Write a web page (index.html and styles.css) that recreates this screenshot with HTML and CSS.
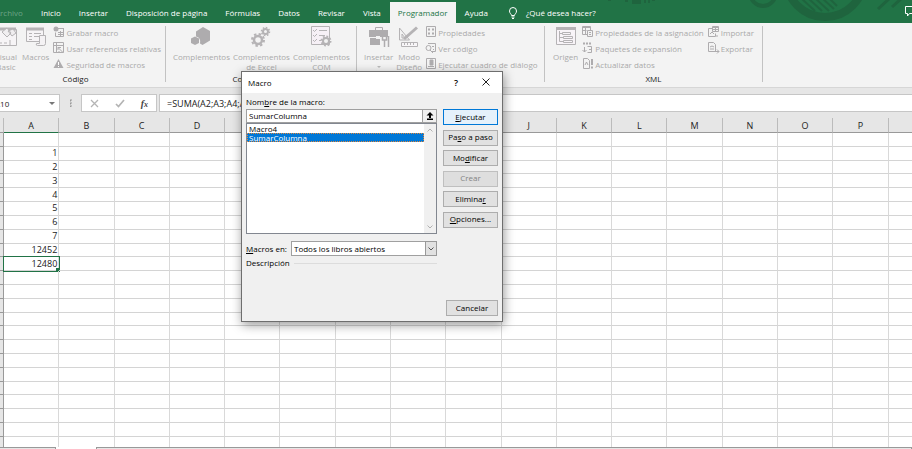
FILE: index.html
```html
<!DOCTYPE html>
<html lang="es">
<head>
    <meta charset="UTF-8">
    <meta name="viewport" content="width=device-width, initial-scale=1.0">
    <title>Excel - Macro</title>
    <link rel="stylesheet" href="styles.css">
</head>
<body>
    <div class="app">
        <header class="topbar">
            <svg class="topbar-art" width="340" height="23" viewBox="0 0 340 23" aria-hidden="true">
                <g fill="none" stroke="#1f643e">
                    <circle cx="191" cy="-6.500" r="12.500" stroke-width="4"/>
                    <circle cx="253" cy="-22" r="39" stroke-width="8"/>
                    <path stroke-width="2" d="M229-2l14 13M236-2l14 13M243-2l14 13M250-2l12 11M257-2l8 8"/>
                    <path stroke-width="3" d="M306 9l12-11M320 7l10-9"/>
                </g>
                <path fill="#1f643e" d="M36 0h3v1h-3zM53 0h3v2h-3zM60 0h9v4h-9zM72 0h2v3h-2zM76 0h2v3h-2zM80 0h3v1h-3z"/>
            </svg>
            <nav class="tabs">
                <a class="tab tab-file" href="#">Archivo</a>
                <a class="tab" href="#">Inicio</a>
                <a class="tab" href="#">Insertar</a>
                <a class="tab" href="#">Disposición de página</a>
                <a class="tab" href="#">Fórmulas</a>
                <a class="tab" href="#">Datos</a>
                <a class="tab" href="#">Revisar</a>
                <a class="tab" href="#">Vista</a>
                <a class="tab active" href="#">Programador</a>
                <a class="tab" href="#">Ayuda</a>
                <a class="tab tell-me" href="#">
                    <svg width="10" height="12" viewBox="0 0 10 12" fill="none" stroke="#fff" stroke-width="1"><path d="M3.500 8.500C3.500 7 1.500 6.500 1.500 4a3.500 3.500 0 0 1 7 0C8.500 6.500 6.500 7 6.500 8.500zM3.500 10h3M4 11.500h2"/></svg>
                    ¿Qué desea hacer?
                </a>
            </nav>
            <button class="comments" aria-label="Comentarios">
                <svg width="12" height="11" viewBox="0 0 12 11" fill="none" stroke="#fff"><path d="M.5.5h11v7h-7l-2 2.500v-2.500h-2z"/></svg>
            </button>
        </header>

        <div class="ribbon">
            <section class="group group-code">
                <div class="group-body">
                    <button class="big" disabled>
                        <svg width="24" height="22" viewBox="0 0 24 22" fill="none" stroke="#b5b3b5"><path d="M1.500 3.500h21v16h-21z" fill="#f6f4f6"/><path d="M2 3h20" stroke-width="3"/><path d="M8 6l5-4 4 5-4 4zM14 5l5-2 3 4-4 3z" fill="#f0eef0"/><path d="M5 17h3M10 17h3M16 14v5"/></svg>
                        <span>Visual<br>Basic</span>
                    </button>
                    <button class="big" disabled>
                        <svg width="22" height="22" viewBox="0 0 22 22" fill="none" stroke="#b5b3b5"><path d="M1.500 2.500h17v13h-17z" fill="#f6f4f6"/><path d="M1 3h18" stroke-width="3"/><path d="M4 7.500h3M9 7.500h7M4 10.500h3M9 10.500h5M4 13.500h3"/><path d="M14.500 9.500h6v8q0 2-2 2h-6q-2 0-1-2h3z" fill="#f4f2f4"/></svg>
                        <span>Macros</span>
                    </button>
                    <div class="stack">
                        <button class="small" disabled>
                            <svg width="12" height="12" viewBox="0 0 12 12" fill="none" stroke="#aeacae"><path d="M3.500 2.500h7v8h-8v-4"/><path d="M6 2.500h5M5 6.500h5M5 8.500h5M7.500 5v5" /><circle cx="3" cy="3" r="2.500" fill="#aeacae" stroke="none"/></svg>
                            Grabar macro
                        </button>
                        <button class="small" disabled>
                            <svg width="12" height="12" viewBox="0 0 12 12" fill="none" stroke="#aeacae"><path d="M.5.5h10v10h-10zM.5 3.500h10M3.500.5v10"/><path d="M5 5.500l5 5M5 8v-2.500h3M5 10h2"/></svg>
                            Usar referencias relativas
                        </button>
                        <button class="small" disabled>
                            <svg width="12" height="12" viewBox="0 0 12 12"><path d="M5.500 1L10.500 10H.5z" fill="#aeacae"/><path d="M5.500 4v3M5.500 8v1" stroke="#fff"/></svg>
                            Seguridad de macros
                        </button>
                    </div>
                </div>
                <h2 class="group-title">Código</h2>
            </section>

            <section class="group group-addins">
                <div class="group-body">
                    <button class="big" disabled>
                        <svg width="22" height="22" viewBox="0 0 22 22" fill="#aeacae"><path d="M6 5.500L13 1l7 4v9.500L12.500 19 10 17.500q1-6-4-7z"/><path d="M1 12.500l4-2 4 2v4.500l-4 2-4-2z"/></svg>
                        <span>Complementos</span>
                    </button>
                    <button class="big" disabled>
                        <svg width="22" height="22" viewBox="0 0 22 22" fill="none" stroke="#b5b3b5"><circle cx="8" cy="14" r="4" stroke-width="2.500"/><circle cx="8" cy="14" r="6" stroke-width="2" stroke-dasharray="2.400 2.300"/><circle cx="15.500" cy="5.500" r="2.500" stroke-width="2"/><circle cx="15.500" cy="5.500" r="4" stroke-width="1.500" stroke-dasharray="1.600 1.500"/></svg>
                        <span>Complementos<br>de Excel</span>
                    </button>
                    <button class="big" disabled>
                        <svg width="22" height="22" viewBox="0 0 22 22" fill="none" stroke="#b5b3b5"><path d="M1.500.5h18v18h-18z" fill="#f6f0f6"/><path d="M3 4l1.500 1.500L7 3M3 9l1.500 1.500L7 8M3 14l1.500 1.500L7 13M9 4.500h8M9 9.500h6M9 14.500h2"/><circle cx="16" cy="15" r="3" fill="#f2f2f2" stroke-width="2"/><circle cx="16" cy="15" r="4.500" stroke-width="2" stroke-dasharray="1.800 1.700"/></svg>
                        <span>Complementos<br>COM</span>
                    </button>
                </div>
                <h2 class="group-title">Complementos</h2>
            </section>

            <section class="group group-controls">
                <div class="group-body">
                    <button class="big" disabled>
                        <svg width="22" height="22" viewBox="0 0 22 22"><path d="M7.500 4.500v-3h7v3" fill="none" stroke="#aeacae"/><path d="M1 4h19v7H1zM2 12h10v7H2z" fill="#aeacae"/><path d="M14.500 11v3h4v-3M16.500 14v7M20.500 10v11" fill="none" stroke="#aeacae" stroke-width="1.500"/><path d="M8 10h4v3H8z" fill="#f2f2f2"/></svg>
                        <span>Insertar</span>
                        <i class="caret"></i>
                    </button>
                    <button class="big" disabled>
                        <svg width="22" height="22" viewBox="0 0 22 22" fill="none" stroke="#b5b3b5"><path d="M1.500 2v12h10zM4 8v4h3z"/><path d="M6 13L19 1.500" stroke-width="3"/><path d="M3.500 16.500h16v4h-16z" fill="#f8f6f8"/><path d="M6.500 17v2M9.500 17v2M12.500 17v2M15.500 17v2"/></svg>
                        <span>Modo<br>Diseño</span>
                    </button>
                    <div class="stack">
                        <button class="small" disabled>
                            <svg width="12" height="12" viewBox="0 0 12 12" fill="none" stroke="#aeacae"><path d="M1.500.5h9v10h-9z"/><path d="M3 3.500h2M7 3.500h2M3 7.500h2M7 7.500h2" stroke-width="2"/></svg>
                            Propiedades
                        </button>
                        <button class="small" disabled>
                            <svg width="12" height="12" viewBox="0 0 12 12" fill="none" stroke="#aeacae"><path d="M3 1.500h7.500v8H7M7 4.500h2M8 7.500h1"/><circle cx="3.500" cy="6" r="2.500"/><path d="M5 8l3 3"/></svg>
                            Ver código
                        </button>
                        <button class="small" disabled>
                            <svg width="12" height="12" viewBox="0 0 12 12" fill="none" stroke="#aeacae"><path d="M1.500.5h9v10h-9zM3 8.500h6"/><path d="M5 2h3v5H5z" fill="#aeacae"/></svg>
                            Ejecutar cuadro de diálogo
                        </button>
                    </div>
                </div>
                <h2 class="group-title">Controles</h2>
            </section>

            <section class="group group-xml">
                <div class="group-body">
                    <button class="big" disabled>
                        <svg width="22" height="22" viewBox="0 0 22 22" fill="none" stroke="#b5b3b5"><path d="M1.500 1.500h19v17h-19z" fill="#f8f4f8"/><path d="M1 2.500h20" stroke-width="3"/><path d="M4.500 5v10.500h4M4.500 7.500h3M4.500 11.500h4M7.500 6.500h8v2h-8zM8.500 10.500h9v2h-9zM8.500 14.500h9v2h-9z"/></svg>
                        <span>Origen</span>
                    </button>
                    <div class="stack">
                        <button class="small" disabled>
                            <svg width="12" height="12" viewBox="0 0 12 12" fill="none" stroke="#aeacae"><path d="M.5.5h8v8h-8zM0 1.500h9M.5 4.500h4M3.500 1v7"/><path d="M5.500 4.500h5v6h-5zM7 6.500h2M7 8.500h2" fill="#f2f2f2"/></svg>
                            Propiedades de la asignación
                        </button>
                        <button class="small" disabled>
                            <svg width="12" height="12" viewBox="0 0 12 12" fill="none" stroke="#aeacae"><path d="M1 1.500h9" stroke-width="2" stroke-dasharray="2 1"/><path d="M5.500 4.500h4v6h-4M2.500 5v5M.5 8l2 2 2-2M7 7.500h2"/></svg>
                            Paquetes de expansión
                        </button>
                        <button class="small" disabled>
                            <svg width="12" height="12" viewBox="0 0 12 12" fill="none" stroke="#aeacae"><path d="M1.500.5h4l2 2v8h-6z"/><path d="M3 7l1.500-3L6 7"/><path d="M10 1v6M10 8.500v2" stroke-width="2"/></svg>
                            Actualizar datos
                        </button>
                    </div>
                    <div class="stack">
                        <button class="small" disabled>
                            <svg width="12" height="12" viewBox="0 0 12 12" fill="none" stroke="#aeacae"><path d="M.5 2.500h4M.5 2.500v8h7v-3M2 8l2-2 2 2M4.500.5h6v5h-6zM4 1.500h7M7.500 1v4M4.500 3.500h6M10 10H8"/></svg>
                            Importar
                        </button>
                        <button class="small" disabled>
                            <svg width="12" height="12" viewBox="0 0 12 12" fill="none" stroke="#aeacae"><path d="M.5.5h5l2 2v7h-7zM2 5l2-1 2 1M2 7h4M7 9.500h4M9 7.500l2 2-2 2"/></svg>
                            Exportar
                        </button>
                    </div>
                </div>
                <h2 class="group-title">XML</h2>
            </section>
        </div>

        <div class="formula-bar">
            <button class="name-box"><span>A10</span><i class="caret"></i></button>
            <span class="grip"></span>
            <div class="formula-tools">
                <button aria-label="Cancelar entrada"><svg width="9" height="9" viewBox="0 0 9 9" stroke="#b4b4b4" stroke-width="1.300"><path d="M1 1l7 7M8 1L1 8"/></svg></button>
                <button aria-label="Introducir"><svg width="10" height="9" viewBox="0 0 10 9" fill="none" stroke="#b4b4b4" stroke-width="1.700"><path d="M1 5l2.500 2.500L9 1"/></svg></button>
                <button class="fx" aria-label="Insertar función">f<small>x</small></button>
            </div>
            <input class="formula" type="text" aria-label="Barra de fórmulas" value="=SUMA(A2;A3;A4;A5;A6;A7;A8;A9)">
        </div>

        <main class="sheet">
            <table class="grid">
                <thead>
                    <tr><th class="corner"></th><th class="selected">A</th><th>B</th><th>C</th><th>D</th><th>E</th><th>F</th><th>G</th><th>H</th><th>I</th><th>J</th><th>K</th><th>L</th><th>M</th><th>N</th><th>O</th><th>P</th><th></th></tr>
                </thead>
                <tbody id="rows"></tbody>
            </table>
        </main>
        <footer class="sheet-tabs">
            <span class="sheet-tab"></span>
            <span class="sheet-tab current"></span>
            <span class="sheet-tab rest"></span>
        </footer>
    </div>

    <form class="dialog" role="dialog" aria-labelledby="dialog-title">
        <div class="dialog-title">
            <h1 id="dialog-title">Macro</h1>
            <button type="button" class="help" aria-label="Ayuda">?</button>
            <button type="button" class="close" aria-label="Cerrar"><svg width="8" height="8" viewBox="0 0 8 8" stroke="#222"><path d="M.5.5l7 7M7.500.5l-7 7"/></svg></button>
        </div>
        <div class="dialog-body">
            <div class="fields">
                <label class="name-label" for="macro-name">Nom<u>b</u>re de la macro:</label>
                <div class="name-row">
                    <input id="macro-name" type="text" value="SumarColumna">
                    <button type="button" aria-label="Contraer"><svg width="8" height="8" viewBox="0 0 8 8"><path d="M4 0l3.500 3.500H5V6H3V3.500H.5zM1 6.500h6v1.500H1z"/></svg></button>
                </div>
                <div class="list">
                    <ul role="listbox" aria-label="Macros">
                        <li role="option">Macro4</li>
                        <li role="option" class="selected" aria-selected="true">SumarColumna</li>
                    </ul>
                    <div class="scroll">
                        <svg width="6" height="4" viewBox="0 0 6 4" fill="none" stroke="#b0b0b0"><path d="M.5 3.500L3 1l2.500 2.500"/></svg>
                        <svg width="6" height="4" viewBox="0 0 6 4" fill="none" stroke="#b0b0b0"><path d="M.5.5L3 3 5.500.5"/></svg>
                    </div>
                </div>
                <div class="in-row">
                    <label for="macros-in"><u>M</u>acros en:</label>
                    <div class="select">
                        <select id="macros-in"><option>Todos los libros abiertos</option></select>
                        <span class="arrow"><svg width="6" height="4" viewBox="0 0 6 4" fill="none" stroke="#555"><path d="M.5.5L3 3 5.500.5"/></svg></span>
                    </div>
                </div>
                <div class="desc-row">Descripción</div>
            </div>
            <div class="actions">
                <div class="action-list">
                    <button type="button" class="btn primary"><u>E</u>jecutar</button>
                    <button type="button" class="btn">Pa<u>s</u>o a paso</button>
                    <button type="button" class="btn">Mo<u>d</u>ificar</button>
                    <button type="button" class="btn" disabled>Crear</button>
                    <button type="button" class="btn">Elimina<u>r</u></button>
                    <button type="button" class="btn"><u>O</u>pciones...</button>
                </div>
                <button type="button" class="btn cancel">Cancelar</button>
            </div>
        </div>
    </form>

    <script>
        // Column A, one entry per row
        const columnA = ['', 1, 2, 3, 4, 5, 6, 7, 12452, 12480];
        const rowCount = 23;
        const activeRow = 9;
        let html = '';
        for (let r = 0; r < rowCount; r++) {
            const value = r < columnA.length ? columnA[r] : '';
            const cls = r === activeRow ? ' class="active"' : '';
            html += '<tr><th>&nbsp;</th><td' + cls + '>' + value + '</td>' + '<td></td>'.repeat(16) + '</tr>';
        }
        document.getElementById('rows').innerHTML = html;
    </script>
</body>
</html>
```
FILE: styles.css
```css
* {
    margin: 0;
    padding: 0;
    box-sizing: border-box;
}

body {
    font-family: "Open Sans", "Noto Sans", sans-serif;
    font-size: 8px;
    color: #222;
    background-color: #e6e6e6;
    overflow: hidden;
}

button, input, select {
    font: inherit;
    color: inherit;
    border: 0;
    border-radius: 0;
    background: none;
}

svg {
    display: block;
    flex: none;
}

.app {
    display: flex;
    flex-direction: column;
    height: 100vh;
}

/* Top bar */
.topbar {
    position: relative;
    display: flex;
    justify-content: space-between;
    flex: none;
    height: 23px;
    background-color: #217346;
}

.topbar-art {
    position: absolute;
    top: 0;
    right: 0;
}

.tabs {
    display: flex;
    align-items: flex-end;
    margin-left: -14px;
}

.tab {
    display: flex;
    align-items: center;
    height: 21px;
    padding: 0 9px;
    color: #fff;
    text-decoration: none;
    white-space: nowrap;
}

.tab-file {
    color: #6da386;
}

.tab.active {
    padding: 0 8px;
    background-color: #f3f3f3;
    color: #217346;
}

.tell-me {
    gap: 8px;
    padding-left: 11px;
}

.comments {
    align-self: center;
    width: 7px;
    overflow: hidden;
    position: relative;
}

/* Ribbon */
.ribbon {
    display: flex;
    flex: none;
    height: 65px;
    padding: 3px 0 5px;
    margin-left: -14px;
    background-color: #f3f3f3;
    border-bottom: 1px solid #d6d6d6;
}

.group {
    display: flex;
    flex-direction: column;
    justify-content: space-between;
    border-right: 1px solid #c2c2c2;
}

.group-code {
    width: 180px;
}

.group-addins {
    width: 191px;
}

.group-controls {
    width: 188px;
}

.group-xml {
    width: 218px;
}

.group-body {
    display: flex;
    gap: 4px;
    padding-left: 8px;
}

.group-addins .group-body,
.group-controls .group-body {
    gap: 3px;
    padding-left: 7px;
}

.group-title {
    font-size: 8px;
    font-weight: 400;
    line-height: 6px;
    text-align: center;
}

.big {
    display: flex;
    flex-direction: column;
    align-items: center;
    height: 48px;
    line-height: 10px;
    color: #aaa;
    white-space: nowrap;
}

.big span {
    margin-top: 4px;
}

.caret {
    border: 3px solid transparent;
    border-top-color: #777;
    border-bottom: 0;
}

.big .caret {
    margin-top: 4px;
    border-width: 2px;
    border-top-color: #bbb;
    border-bottom: 0;
}

.stack {
    display: flex;
    flex-direction: column;
    margin-top: -1px;
}

.small {
    display: flex;
    align-items: center;
    gap: 1px;
    height: 16px;
    padding-bottom: 2px;
    color: #aaa;
    white-space: nowrap;
}

/* Formula bar */
.formula-bar {
    display: flex;
    align-items: center;
    flex: none;
    height: 30px;
}

.name-box {
    display: flex;
    align-items: center;
    justify-content: space-between;
    width: 66px;
    height: 18px;
    padding-right: 4px;
    margin-left: -6px;
    background-color: #fff;
    border: 1px solid #c6c6c6;
}

.grip {
    width: 21px;
    height: 8px;
    background: radial-gradient(circle, #999 1px, transparent 1px) center / 21px 3px;
}

.formula-tools {
    display: flex;
    align-items: center;
    justify-content: space-around;
    width: 76px;
    height: 18px;
    background-color: #fff;
    border: 1px solid #c6c6c6;
}

.fx {
    font: italic 700 10px "Liberation Serif", serif;
    color: #444;
}

.fx small {
    font-size: 8px;
}

.formula {
    flex: 1;
    height: 18px;
    padding-left: 7px;
    margin-left: 2px;
    font-size: 9px;
    background-color: #fff;
    border: 1px solid #c6c6c6;
    border-right: 0;
}

/* Sheet */
.sheet {
    flex: 1;
    min-height: 0;
    overflow: hidden;
    background-color: #fff;
}

.grid {
    width: 944px;
    height: 333px;
    table-layout: fixed;
    border-collapse: separate;
    border-spacing: 0;
    font-size: 9px;
    line-height: 12px;
}

.grid th {
    font-weight: 400;
    background-color: #e6e6e6;
    border-right: 1px solid #bbb;
    border-bottom: 1px solid #999;
}

.grid thead th {
    height: 15px;
    padding-top: 2px;
}

.grid .corner {
    width: 4px;
}

.grid thead .selected {
    border-bottom: 1px solid #217346;
}

.grid tbody th {
    border-right-color: #999;
}

.grid td {
    position: relative;
    padding-right: 1px;
    text-align: right;
    border-right: 1px solid #d9d9d9;
    border-bottom: 1px solid #d4d4d4;
}

.grid .active {
    outline: 1px solid #217346;
}

.grid .active::after {
    content: "";
    position: absolute;
    right: -2px;
    bottom: -2px;
    width: 4px;
    height: 4px;
    background-color: #217346;
}

.sheet-tabs {
    display: flex;
    flex: none;
    height: 2px;
}

.sheet-tab {
    width: 56px;
    border-top: 1px solid #999;
    border-right: 1px solid #999;
}

.sheet-tab.current {
    width: 41px;
    background-color: #fff;
    border-top: 0;
}

.sheet-tab.rest {
    flex: 1;
}

/* Macro dialog */
.dialog {
    position: absolute;
    left: 241px;
    top: 71px;
    width: 262px;
    background-color: #f0f0f0;
    border: 1px solid #6e6e6e;
    box-shadow: 1px 3px 10px rgba(0, 0, 0, 0.4);
    color: #000;
}

.dialog-title {
    display: flex;
    align-items: center;
    height: 21px;
    padding: 0 12px 1px 6px;
    background-color: #fff;
}

.dialog-title h1 {
    flex: 1;
    font-size: 8px;
    font-weight: 400;
}

.help {
    margin-right: 24px;
    font-size: 9px;
    font-weight: 600;
}

.dialog-body {
    display: flex;
    gap: 6px;
    padding: 3px 4px 5px;
}

.fields {
    flex: 1;
}

.name-label {
    display: block;
    margin-bottom: 1px;
    line-height: 12px;
}

.name-row {
    display: flex;
    height: 14px;
    border: 1px solid #a0a0a0;
}

.name-row input {
    flex: 1;
    min-width: 0;
    padding: 0 2px 1px;
    background-color: #fff;
}

.name-row button {
    display: flex;
    align-items: center;
    justify-content: center;
    width: 14px;
    border-left: 1px solid #a0a0a0;
}

.list {
    display: flex;
    height: 111px;
    background-color: #fff;
    border: 1px solid #828790;
}

.list ul {
    flex: 1;
    list-style: none;
    line-height: 9px;
}

.list li {
    padding-left: 2px;
}

.list .selected {
    color: #fff;
    background-color: #0078d7;
    outline: 1px dotted #e0873c;
    outline-offset: -1px;
}

.scroll {
    display: flex;
    flex-direction: column;
    align-items: center;
    justify-content: space-between;
    width: 12px;
    padding: 4px 0;
    background-color: #f0f0f0;
}

.in-row {
    display: flex;
    align-items: center;
    justify-content: space-between;
    margin-top: 7px;
}

.select {
    position: relative;
    width: 146px;
}

.select select {
    display: block;
    width: 100%;
    height: 15px;
    padding: 0 2px 1px;
    background-color: #fff;
    border: 1px solid #a0a0a0;
    appearance: none;
}

.select .arrow {
    position: absolute;
    top: 0;
    right: 0;
    display: flex;
    align-items: center;
    justify-content: center;
    width: 12px;
    height: 15px;
    background-color: #e1e1e1;
    border: 1px solid #999;
    pointer-events: none;
}

.desc-row {
    display: flex;
    align-items: center;
    gap: 4px;
    line-height: 14px;
}

.desc-row::after {
    content: "";
    flex: 1;
    height: 1px;
    background-color: #dcdcdc;
}

.actions {
    display: flex;
    flex-direction: column;
    justify-content: space-between;
    align-items: flex-end;
    width: 55px;
    height: 220px;
    padding-top: 13px;
}

.action-list {
    display: flex;
    flex-direction: column;
    justify-content: space-between;
    width: 100%;
    height: 119px;
}

.btn {
    height: 16px;
    padding-bottom: 2px;
    background-color: #e1e1e1;
    border: 1px solid #adadad;
    white-space: nowrap;
}

.btn.primary {
    background-color: #e5f1fb;
    border-color: #0078d7;
}

.btn:disabled {
    color: #838383;
    background-color: #dedede;
    border-color: #bfbfbf;
}

.cancel {
    width: 52px;
}
```
